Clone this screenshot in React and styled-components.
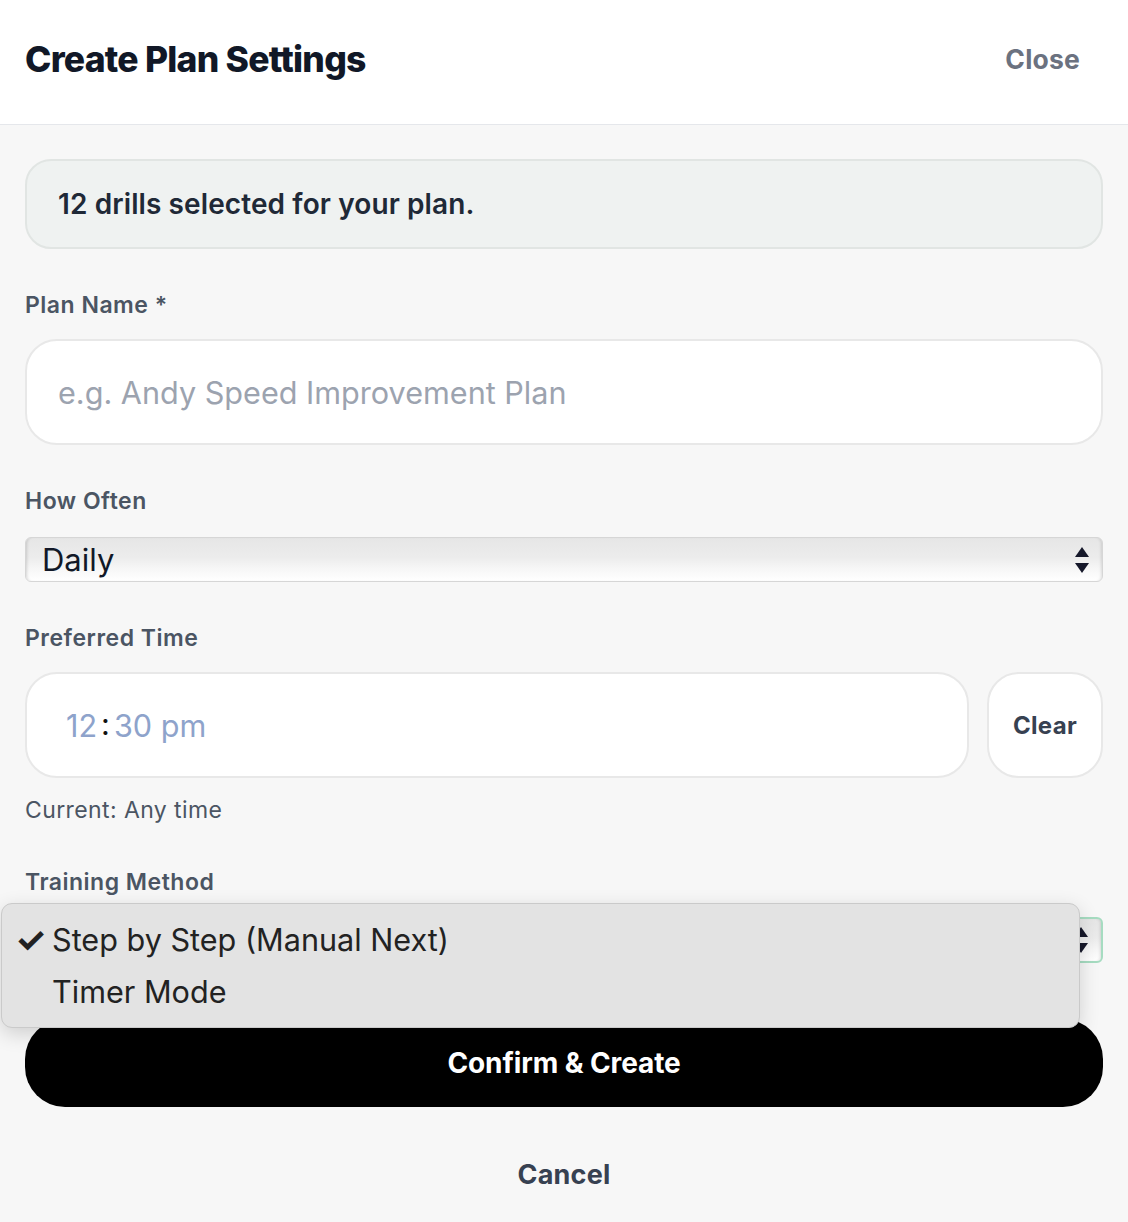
import React from "react";
import styled, { createGlobalStyle } from "styled-components";

const Global = createGlobalStyle`
  html, body { margin: 0; padding: 0; background: #f7f7f7; }
  body { font-family: Inter, "Noto Sans", sans-serif; -webkit-font-smoothing: antialiased; }
  * { box-sizing: border-box; }
`;

const Page = styled.div`
  width: 1128px;
  min-height: 1222px;
  background: #f7f7f7;
  display: flex;
  flex-direction: column;
`;

const Header = styled.header`
  height: 125px;
  background: #ffffff;
  border-bottom: 1px solid #e5e7eb;
  display: flex;
  align-items: center;
  justify-content: space-between;
  padding: 0 48px 6px 25px;
`;

const Title = styled.h1`
  margin: 0;
  font-size: 35.5px;
  font-weight: 800;
  letter-spacing: -0.75px;
  color: #111827;
`;

const TextButton = styled.button`
  border: none;
  background: none;
  padding: 0;
  font-family: Inter, sans-serif;
  font-size: ${(p) => p.$size || 26}px;
  font-weight: 700;
  color: ${(p) => p.$color || "#6b7280"};
  letter-spacing: ${(p) => p.$spacing || 0.2}px;
  cursor: pointer;
`;

const Body = styled.main`
  padding: 34px 25px 0;
  display: flex;
  flex-direction: column;
`;

const Notice = styled.div`
  height: 90px;
  border-radius: 26px;
  background: #eff2f1;
  border: 2px solid #e1e5e3;
  display: flex;
  align-items: center;
  padding: 0 31px;
  font-size: 28px;
  font-weight: 600;
  color: #1f2937;
  letter-spacing: 0.1px;
`;

const Field = styled.section`
  margin-top: ${(p) => p.$top || 42}px;
  display: flex;
  flex-direction: column;
`;

const Label = styled.label`
  font-size: 23px;
  line-height: 28px;
  font-weight: 600;
  color: #4b5563;
  letter-spacing: 0.5px;
  margin-bottom: ${(p) => p.$gap || 20}px;
`;

const Pill = styled.div`
  height: 106px;
  border-radius: 32px;
  background: #ffffff;
  border: 2px solid #e8e8e8;
  display: flex;
  align-items: center;
  padding: 0 ${(p) => p.$pad || 31}px;
  font-size: 30.6px;
  color: ${(p) => p.$color || "#9ca3af"};
  flex: ${(p) => p.$flex || "none"};
`;

const Row = styled.div`
  display: flex;
  gap: 18px;
`;

const ClearButton = styled.button`
  width: 116px;
  height: 106px;
  border-radius: 32px;
  background: #ffffff;
  border: 2px solid #e8e8e8;
  font-family: Inter, sans-serif;
  font-size: 24px;
  font-weight: 700;
  color: #374151;
  letter-spacing: 0.3px;
`;

const TimeSep = styled.span`
  color: #111;
  margin: 0 4px;
  position: relative;
  top: -2px;
`;

const Hint = styled.div`
  margin-top: 18px;
  font-size: 23px;
  line-height: 28px;
  color: #4b5563;
  letter-spacing: 0.4px;
`;

const Select = styled.div`
  position: relative;
  height: ${(p) => (p.$focused ? 46 : 45)}px;
  border-radius: 6px;
  border: ${(p) => (p.$focused ? "2px solid #a6dcc1" : "1px solid #d6d6d6")};
  background: linear-gradient(#e6e6e6 0%, #ececec 45%, #f6f6f6 70%, #ffffff 100%);
  box-shadow: inset 3px 0 3px -2px rgba(0, 0, 0, 0.15), inset -3px 0 3px -2px rgba(0, 0, 0, 0.12);
  display: flex;
  align-items: center;
  justify-content: space-between;
  padding: 0 12px 0 16px;
  font-size: 31px;
  color: #111827;
`;

/* the value line sits under the open option list */
const SelectValue = styled.span`
  visibility: ${(p) => (p.$covered ? "hidden" : "visible")};
`;

const Arrows = () => (
  <svg width="16" height="30" viewBox="0 0 16 30">
    <path d="M8 2 L15 12 L1 12 Z" fill="#16182a" />
    <path d="M8 28 L15 18 L1 18 Z" fill="#16182a" />
  </svg>
);

const Menu = styled.ul`
  position: absolute;
  left: -26px;
  top: -16px;
  width: 1079px;
  height: 125px;
  margin: 0;
  padding: 9px 0 0;
  list-style: none;
  background: #e3e3e3;
  border: 1px solid #cacaca;
  border-radius: 11px;
  box-shadow: 0 6px 20px rgba(0, 0, 0, 0.16);
  z-index: 5;
`;

const MenuItem = styled.li`
  display: flex;
  align-items: center;
  height: 52px;
  font-size: 30.6px;
  color: #222222;
  font-family: Inter, sans-serif;
`;

const Check = styled.span`
  width: 50px;
  padding-left: 13px;
  font-size: 35px;
  font-weight: 700;
  color: #222;
`;

const PrimaryButton = styled.button`
  margin-top: 56px;
  height: 88px;
  border: none;
  border-radius: 40px;
  background: #000000;
  color: #ffffff;
  font-family: Inter, sans-serif;
  font-size: 28px;
  font-weight: 700;
  letter-spacing: -0.1px;
`;

const Footer = styled.div`
  height: 117px;
  display: flex;
  align-items: center;
  justify-content: center;
  padding-top: 18px;
`;

export default function App() {
  return (
    <Page>
      <Global />
      <Header>
        <Title>Create Plan Settings</Title>
        <TextButton $size={26.5}>Close</TextButton>
      </Header>
      <Body>
        <Notice>12 drills selected for your plan.</Notice>

        <Field>
          <Label>Plan Name *</Label>
          <Pill>e.g. Andy Speed Improvement Plan</Pill>
        </Field>

        <Field>
          <Label $gap={22}>How Often</Label>
          <Select>
            <SelectValue>Daily</SelectValue>
            <Arrows />
          </Select>
        </Field>

        <Field>
          <Label>Preferred Time</Label>
          <Row>
            <Pill $flex="1" $pad={39} $color="#8ea3cb">
              12<TimeSep>:</TimeSep>30 pm
            </Pill>
            <ClearButton>Clear</ClearButton>
          </Row>
          <Hint>Current: Any time</Hint>
        </Field>

        <Field $top={44}>
          <Label $gap={21}>Training Method</Label>
          <Select $focused>
            <SelectValue $covered>Step by Step (Manual Next)</SelectValue>
            <Arrows />
            <Menu>
              <MenuItem>
                <Check>✓</Check>Step by Step (Manual Next)
              </MenuItem>
              <MenuItem>
                <Check />Timer Mode
              </MenuItem>
            </Menu>
          </Select>
        </Field>

        <PrimaryButton>Confirm &amp; Create</PrimaryButton>
        <Footer>
          <TextButton $size={27} $color="#374151" $spacing={0}>Cancel</TextButton>
        </Footer>
      </Body>
    </Page>
  );
}
